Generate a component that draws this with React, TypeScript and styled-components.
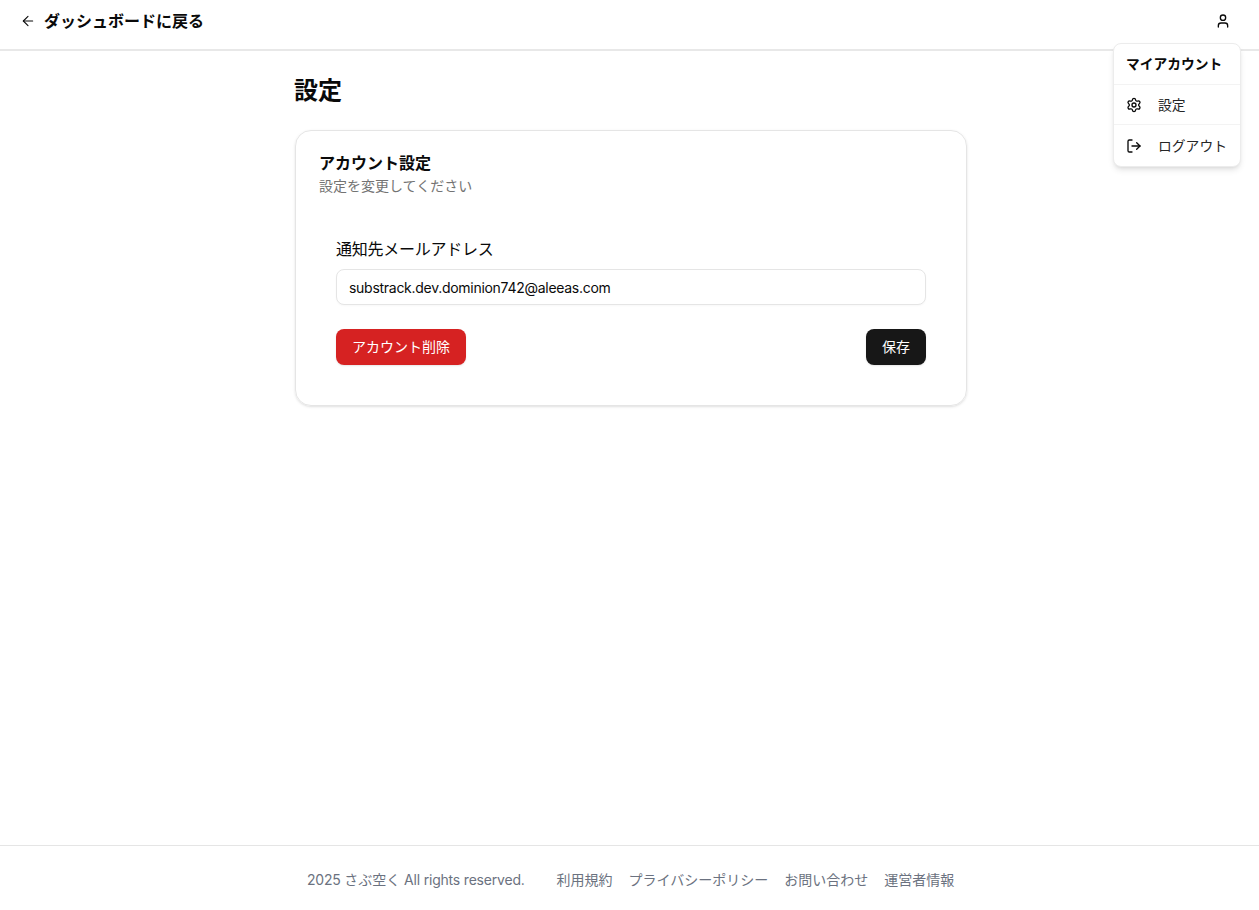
import React from "react";
import styled, { createGlobalStyle } from "styled-components";
import { ArrowLeft, LogOut, Settings, User } from "lucide-react";

const Global = createGlobalStyle`
  html, body { margin: 0; padding: 0; height: 100%; background: #fff; }
  body { font-family: Inter, "Noto Sans CJK JP", sans-serif; color: #0a0a0a; -webkit-font-smoothing: antialiased; }
  * { box-sizing: border-box; }
  #root { height: 100%; }
`;

const Page = styled.div`
  position: relative;
  min-height: 910px;
  display: flex;
  flex-direction: column;
`;

const Header = styled.header`
  height: 51px;
  padding: 0 20px;
  display: flex;
  align-items: flex-start;
  justify-content: space-between;
  border-bottom: 2px solid #e8e8e8;
`;

const BackLink = styled.a`
  height: 42px;
  display: flex;
  align-items: center;
  gap: 8px;
  font-size: 16px;
  font-weight: 700;
  color: #0a0a0a;
`;

const BackLabel = styled.span`
  margin-top: -3px;
`;

const UserButton = styled.button`
  width: 16px;
  height: 42px;
  margin-right: 8px;
  padding: 0;
  border: 0;
  background: none;
  display: flex;
  align-items: center;
  justify-content: center;
  color: #0a0a0a;
`;

const Menu = styled.div`
  position: absolute;
  top: 43px;
  left: 1113px;
  width: 128px;
  height: 124px;
  background: #fff;
  border: 1px solid #ececec;
  border-radius: 8px;
  box-shadow: 0 4px 6px -1px rgba(0,0,0,.1), 0 2px 4px -2px rgba(0,0,0,.1);
  display: flex;
  flex-direction: column;
`;

const MenuTitle = styled.div`
  height: 41px;
  padding: 0 12px 2px;
  display: flex;
  align-items: center;
  font-size: 13.75px;
  font-weight: 700;
  border-bottom: 1px solid #f3f3f3;
`;

const MenuItem = styled.div<{ $last?: boolean }>`
  height: 41px;
  padding: 0 12px;
  display: flex;
  align-items: center;
  gap: 16px;
  font-size: 13.8px;
  color: #262626;
  border-bottom: ${(p) => (p.$last ? "0" : "1px solid #f3f3f3")};
`;

const MenuLabel = styled.span`
  margin-top: -2px;
`;

const Main = styled.main`
  flex: 1;
  width: 672px;
  margin-left: 295px;
  padding-top: 22px;
`;

const PageTitle = styled.h1`
  margin: 0 0 22px -1px;
  font-size: 24px;
  line-height: 35px;
  font-weight: 700;
`;

const Card = styled.section`
  height: 276px;
  padding: 23px 40px 0 23px;
  border: 1px solid #e5e5e5;
  border-radius: 16px;
  box-shadow: 0 1px 3px rgba(0,0,0,.1), 0 1px 2px -1px rgba(0,0,0,.1);
`;

const CardTitle = styled.h2`
  margin: 0;
  font-size: 16px;
  line-height: 18px;
  font-weight: 700;
`;

const CardSubtitle = styled.p`
  margin: 4px 0 0;
  font-size: 14px;
  line-height: 20px;
  color: #737373;
`;

const Form = styled.form`
  margin: 41px 0 0 17px;
`;

const Label = styled.label`
  display: block;
  font-size: 16px;
  line-height: 24px;
  letter-spacing: -0.25px;
`;

const Input = styled.input`
  display: block;
  width: 100%;
  height: 36px;
  margin-top: 8px;
  padding: 0 12px;
  border: 1px solid #e5e5e5;
  border-radius: 8px;
  font: 14px Inter, "Noto Sans CJK JP", sans-serif;
  letter-spacing: -0.28px;
  color: #0a0a0a;
  background: #fff;
  outline: none;
  box-shadow: 0 1px 2px rgba(0,0,0,.03);
`;

const Actions = styled.div`
  margin-top: 24px;
  display: flex;
  justify-content: space-between;
`;

const Button = styled.button<{ $tone: "danger" | "dark" }>`
  height: 36px;
  padding: 0 16px 2px;
  border: 0;
  border-radius: 8px;
  background: ${(p) => (p.$tone === "danger" ? "#d62222" : "#171717")};
  color: #fff;
  font: 400 14px Inter, "Noto Sans CJK JP", sans-serif;
  box-shadow: 0 1px 2px rgba(0,0,0,.1);
`;

const Footer = styled.footer`
  height: 65px;
  border-top: 1px solid #e5e5e5;
  padding: 24px 0 0 307px;
  display: flex;
  align-items: flex-start;
  font-size: 14px;
  line-height: 20px;
  color: #6b7280;
`;

const Copyright = styled.span`
  margin-right: 32px;
`;

const Latin = styled.span`
  letter-spacing: -0.2px;
`;

const FooterLinks = styled.nav`
  display: flex;
  gap: 16px;
`;

export default function App() {
  return (
    <Page>
      <Global />
      <Header>
        <BackLink>
          <ArrowLeft size={16} strokeWidth={1.6} />
          <BackLabel>ダッシュボードに戻る</BackLabel>
        </BackLink>
        <UserButton aria-label="ユーザー">
          <User size={16} strokeWidth={2} />
        </UserButton>
      </Header>
      <Menu>
        <MenuTitle>マイアカウント</MenuTitle>
        <MenuItem>
          <Settings size={16} strokeWidth={2} color="#0a0a0a" />
          <MenuLabel>設定</MenuLabel>
        </MenuItem>
        <MenuItem $last>
          <LogOut size={16} strokeWidth={2} color="#0a0a0a" />
          <MenuLabel>ログアウト</MenuLabel>
        </MenuItem>
      </Menu>
      <Main>
        <PageTitle>設定</PageTitle>
        <Card>
          <CardTitle>アカウント設定</CardTitle>
          <CardSubtitle>設定を変更してください</CardSubtitle>
          <Form>
            <Label>通知先メールアドレス</Label>
            <Input readOnly value="substrack.dev.dominion742@aleeas.com" />
            <Actions>
              <Button type="button" $tone="danger">アカウント削除</Button>
              <Button type="button" $tone="dark">保存</Button>
            </Actions>
          </Form>
        </Card>
      </Main>
      <Footer>
        <Copyright>
          <Latin>2025 </Latin>さぶ空く<Latin> All rights reserved.</Latin>
        </Copyright>
        <FooterLinks>
          <span>利用規約</span>
          <span>プライバシーポリシー</span>
          <span>お問い合わせ</span>
          <span>運営者情報</span>
        </FooterLinks>
      </Footer>
    </Page>
  );
}
